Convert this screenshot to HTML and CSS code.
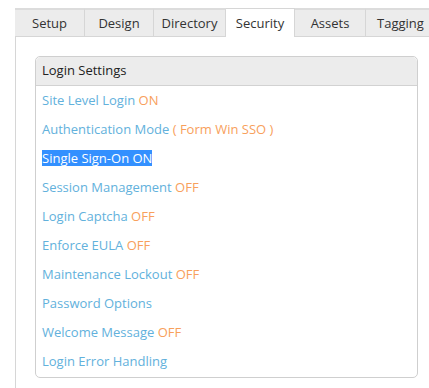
FILE: index.html
```html
<!DOCTYPE html>
<html lang="en">
<head>
    <meta charset="UTF-8">
    <meta name="viewport" content="width=device-width, initial-scale=1.0">
    <title>Security Settings</title>
    <link rel="stylesheet" href="styles.css">
</head>
<body>

<div class="tabs">
    <div class="tab tab-setup">Setup</div>
    <div class="tab tab-design">Design</div>
    <div class="tab tab-directory">Directory</div>
    <div class="tab tab-security active">Security</div>
    <div class="tab tab-assets">Assets</div>
    <div class="tab tab-tagging">Tagging</div>
</div>

<div class="content">
    <div class="panel">
        <div class="panel-head">Login Settings</div>
        <div class="row">Site Level Login <span class="state">ON</span></div>
        <div class="row">Authentication Mode <span class="state">( Form Win SSO )</span></div>
        <div class="row"><span class="selected">Single Sign-On ON</span></div>
        <div class="row">Session Management <span class="state">OFF</span></div>
        <div class="row">Login Captcha <span class="state">OFF</span></div>
        <div class="row">Enforce EULA <span class="state">OFF</span></div>
        <div class="row">Maintenance Lockout <span class="state">OFF</span></div>
        <div class="row">Password Options</div>
        <div class="row">Welcome Message <span class="state">OFF</span></div>
        <div class="row">Login Error Handling</div>
    </div>
</div>

</body>
</html>
```

FILE: styles.css
```css
body {
    margin: 0;
    padding-top: 8px;
    font-family: "Open Sans", Arial, sans-serif;
    font-size: 13px;
    background: white;
    overflow: hidden;
    height: 380px;
}
.tabs {
    display: flex;
    margin-left: 15px;
    height: 28px;
    border-bottom: 1px solid #d6d6d6;
}
.tab {
    box-sizing: border-box;
    height: 28px;
    line-height: 27px;
    text-align: center;
    color: #333;
    background-color: #ececec;
    border-top: 2px solid #dcdcdc;
    border-right: 1px solid #d6d6d6;
    flex-shrink: 0;
}
.tab-setup { width: 70px; }
.tab-design { width: 69px; }
.tab-directory { width: 72px; }
.tab-security { width: 69px; }
.tab-assets { width: 71px; }
.tab-tagging { width: 70px; }
.tab.active {
    background-color: white;
    height: 29px;
    border-top: 1px solid #d6d6d6;
    line-height: 28px;
}
.content {
    margin-left: 15px;
    border-left: 1px solid #d6d6d6;
    padding: 19px 0 10px 19px;
}
.panel {
    width: 383px;
    border: 1px solid #cfcfcf;
    border-radius: 5px;
    box-sizing: border-box;
    padding-bottom: 1px;
}
.panel-head {
    height: 28px;
    line-height: 27px;
    padding-left: 6px;
    color: #222;
    background-color: #ececec;
    border-bottom: 1px solid #d2d2d2;
    border-radius: 5px 5px 0 0;
}
.row {
    height: 29px;
    line-height: 29px;
    padding-left: 6px;
    color: #62b1dc;
}
.state {
    color: #f8a05c;
}
.selected {
    background-color: #3390ff;
    color: white;
    line-height: 16px;
    display: inline-block;
}
```
